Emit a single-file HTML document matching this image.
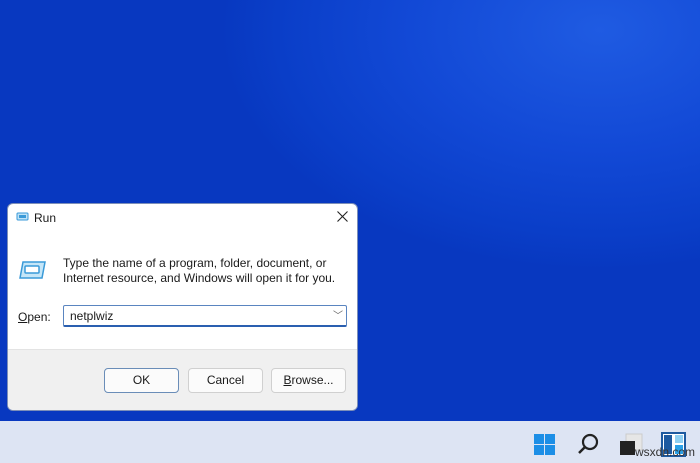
<!DOCTYPE html>
<html><head><style>
body{margin:0;width:700px;height:463px;overflow:hidden;position:relative;font-family:"Liberation Sans",sans-serif;
background:radial-gradient(ellipse 380px 240px at 600px 30px,#1f5be2 0%,#1249d6 50%,#0a3ec8 85%,#0838c0 100%);}
.tb{position:absolute;left:0;top:421px;width:700px;height:42px;background:#dde4f3;}
.dlg{position:absolute;left:7px;top:203px;width:351px;height:208px;background:#fff;border-radius:6px;overflow:hidden;border:1px solid #7d8fb8;box-sizing:border-box}
.foot{position:absolute;left:0;top:145px;width:100%;height:63px;background:#f0f0f0;border-top:1px solid #e3e3e3}
.btn{position:absolute;top:163px;height:25px;width:75px;box-sizing:border-box;border:1px solid #d0d0d0;border-radius:4px;background:#fbfbfb;font-size:12px;text-align:center;line-height:23px;color:#1a1a1a}
.t{position:absolute;font-size:12px;color:#1a1a1a}
</style></head><body>
<div class="dlg">
 <svg style="position:absolute;left:8px;top:8px" width="13" height="10"><rect x="1" y="1" width="11" height="7" rx="1" fill="#bfe3f7" stroke="#3a9ad8"/><rect x="3" y="3" width="7" height="3" fill="#3a9ad8"/></svg>
 <div class="t" style="left:26px;top:7px">Run</div>
 <svg style="position:absolute;left:329px;top:7px" width="11" height="11"><path d="M0.5 0.5L10.5 10.5M10.5 0.5L0.5 10.5" stroke="#222" stroke-width="1.1"/></svg>
 <svg style="position:absolute;left:11px;top:56px" width="28" height="20"><path d="M4 2h22l-3 16H1z" fill="#c5e6f8" stroke="#3a9ad8" stroke-width="1.5"/><rect x="6" y="6" width="14" height="7" rx="1" fill="#fff" stroke="#3a9ad8" stroke-width="1.5"/></svg>
 <div class="t" style="left:55px;top:52px;line-height:15px">Type the name of a program, folder, document, or<br>Internet resource, and Windows will open it for you.</div>
 <div class="t" style="left:10px;top:106px"><u>O</u>pen:</div>
 <div style="position:absolute;left:55px;top:101px;width:284px;height:22px;box-sizing:border-box;border:1px solid #5a85c0;border-bottom:2px solid #2a5fb0;border-radius:2px"></div>
 <div class="t" style="left:62px;top:105px">netplwiz</div>
 <div class="t" style="left:325px;top:103px;color:#666;font-size:10px">﹀</div>
 <div class="foot">
  <div class="btn" style="left:96px;top:18px;border-color:#6a8db8">OK</div>
  <div class="btn" style="left:180px;top:18px">Cancel</div>
  <div class="btn" style="left:263px;top:18px"><u>B</u>rowse...</div>
 </div>
</div>
<div class="tb">
 <svg style="position:absolute;left:533px;top:12px" width="24" height="24"><g fill="#1c8ee6"><rect x="1" y="1" width="10" height="10"/><rect x="12" y="1" width="10" height="10"/><rect x="1" y="12" width="10" height="10"/><rect x="12" y="12" width="10" height="10"/></g></svg>
 <svg style="position:absolute;left:577px;top:11px" width="24" height="24"><circle cx="13" cy="10" r="7" fill="none" stroke="#222" stroke-width="2.2"/><path d="M8 15L2 21" stroke="#222" stroke-width="2.5"/></svg>
 <svg style="position:absolute;left:618px;top:12px" width="26" height="24"><rect x="8" y="1" width="16" height="16" fill="#e6e6e6" stroke="#ccc"/><rect x="2" y="8" width="15" height="14" fill="#222"/></svg>
 <svg style="position:absolute;left:661px;top:11px" width="26" height="26"><rect x="1" y="1" width="23" height="23" fill="#fff" stroke="#1d5aa0" stroke-width="2"/><rect x="3" y="3" width="8" height="19" fill="#1d5aa0"/><rect x="14" y="3" width="8" height="8" fill="#8fd0f2"/><rect x="14" y="13" width="8" height="9" fill="#2aa0e6"/></svg>
 <div style="position:absolute;left:635px;top:24px;font-size:12px;color:#333">wsxdn.com</div>
</div>
</body></html>
